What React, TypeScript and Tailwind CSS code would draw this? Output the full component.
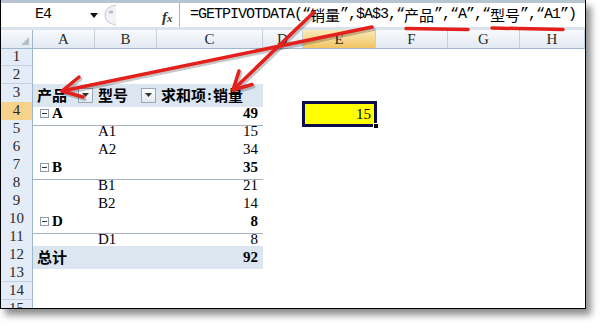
import React from 'react';

const cols = 'grid grid-cols-[32px_62px_62px_106px_40px_73px_72px_72px_1fr]';
const cjk = "font-['Noto_Sans_CJK_SC'] tracking-normal";

function MinusBox() {
  return (
    <span className="inline-flex w-[9px] h-[9px] border border-[#8e9aab] bg-white items-center justify-center mr-[3px]">
      <span className="block w-[5px] h-px bg-[#333]" />
    </span>
  );
}

function DropButton() {
  return (
    <span className="flex w-[15px] h-[15px] border border-[#9aa8b8] bg-gradient-to-b from-[#ffffff] to-[#e3e8ee] items-center justify-center">
      <svg width="7" height="4" viewBox="0 0 7 4">
        <path d="M0 0h7L3.5 4z" fill="#333" />
      </svg>
    </span>
  );
}

type PivotRow = {
  kind: 'header' | 'group' | 'item' | 'total';
  a?: string;
  b?: string;
  v?: string;
  line?: boolean;
};

const pivot: Record<number, PivotRow> = {
  3: { kind: 'header' },
  4: { kind: 'group', a: 'A', v: '49', line: true },
  5: { kind: 'item', b: 'A1', v: '15' },
  6: { kind: 'item', b: 'A2', v: '34' },
  7: { kind: 'group', a: 'B', v: '35', line: true },
  8: { kind: 'item', b: 'B1', v: '21' },
  9: { kind: 'item', b: 'B2', v: '14' },
  10: { kind: 'group', a: 'D', v: '8', line: true },
  11: { kind: 'item', b: 'D1', v: '8', line: true },
  12: { kind: 'total', v: '92' },
};

function PivotCells({ row }: { row?: PivotRow }) {
  if (!row) {
    return (
      <>
        <div />
        <div />
        <div />
      </>
    );
  }
  const line = row.line ? 'border-b border-[#a7b2c0]' : '';
  const fill = row.kind === 'header' || row.kind === 'total' ? 'bg-[#dce6f1]' : '';

  if (row.kind === 'header') {
    return (
      <>
        <div className={`${fill} flex items-center justify-between pl-[4px] pr-[2px]`}>
          <span className={`${cjk} text-[15px] font-bold`}>产品</span>
          <DropButton />
        </div>
        <div className={`${fill} flex items-center justify-between pl-[3px] pr-[1px]`}>
          <span className={`${cjk} text-[15px] font-bold`}>型号</span>
          <DropButton />
        </div>
        <div className={`${fill} flex items-center pl-[4px]`}>
          <span className={`${cjk} text-[15px] font-bold`}>求和项</span>
          <span className="font-bold px-[1px]">:</span>
          <span className={`${cjk} text-[15px] font-bold`}>销量</span>
        </div>
      </>
    );
  }

  const bold = row.kind !== 'item' ? 'font-bold' : '';
  return (
    <>
      <div className={`${fill} ${line} flex items-center pl-[7px]`}>
        {row.kind === 'group' && (
          <>
            <MinusBox />
            <span className="font-bold">{row.a}</span>
          </>
        )}
        {row.kind === 'total' && (
          <span className={`${cjk} text-[15px] font-bold -ml-[3px]`}>总计</span>
        )}
      </div>
      <div className={`${fill} ${line} flex items-center pl-[3px]`}>{row.b}</div>
      <div className={`${fill} ${line} ${bold} flex items-center justify-end pr-[5px]`}>{row.v}</div>
    </>
  );
}

function SheetRow({ n }: { n: number }) {
  const active = n === 4;
  return (
    <div className={`${cols} h-[18px] shrink-0`}>
      <div
        className={`${
          active ? 'bg-[#f7d28a]' : 'bg-[#e4ecf7]'
        } border-r border-[#9eb6ce] border-b border-b-[#c3d1e1] text-center leading-[17px] text-[15px] text-[#2a2a2a]`}
      >
        {n}
      </div>
      <PivotCells row={pivot[n]} />
      <div />
      <div className="relative">
        {active && (
          <>
            <div className="absolute -top-[1px] -left-[1px] -right-[1px] -bottom-[1px] border-[3px] border-[#0c0c4e] bg-[#ffff00] flex items-center justify-end pr-[3px]">
              15
            </div>
            <div className="absolute -right-[3px] -bottom-[3px] w-[6px] h-[6px] bg-black border border-white" />
          </>
        )}
      </div>
      <div />
      <div />
      <div />
    </div>
  );
}

function ColHead({ label, active }: { label: string; active?: boolean }) {
  return (
    <div
      className={`${
        active
          ? 'bg-gradient-to-b from-[#fbebb6] to-[#f2c462]'
          : 'bg-gradient-to-b from-[#f8fafd] to-[#e2e9f2]'
      } border-r border-[#c5d0dd] border-b border-b-[#9eb6ce] text-center leading-[18px] text-[15px] text-[#2a2a2a]`}
    >
      {label}
    </div>
  );
}

export default function App() {
  const rows = Array.from({ length: 15 }, (_, i) => i + 1);
  return (
    <div className="w-[607px] h-[330px] bg-white overflow-hidden font-['Liberation_Serif'] text-black text-[15px]">
      <div className="relative w-[586px] h-[309px] border-l border-r border-b border-black bg-white flex flex-col shadow-[5px_6px_7px_rgba(0,0,0,0.45)]">
        {/* formula bar */}
        <div className="h-[3px] bg-[#b9c4d1] shrink-0" />
        <div className="h-[24px] flex shrink-0 bg-white font-['Liberation_Mono'] tracking-[-1px]">
          <div className="w-[99px] flex items-center pl-[34px] relative">
            <span className="text-[15px]">E4</span>
            <svg className="absolute left-[89px] top-[10px]" width="8" height="5" viewBox="0 0 8 5">
              <path d="M0 0h8L4 5z" fill="#111" />
            </svg>
          </div>
          <div className="w-[79px] flex items-center relative">
            <svg className="absolute left-[2px] top-[1px]" width="16" height="22" viewBox="0 0 16 22">
              <path d="M14 1C7 2 3 6 3 11s4 9 11 10" fill="#f1f3f6" stroke="#c7ced8" strokeWidth="1.2" />
              <ellipse cx="9" cy="8" rx="2.5" ry="1.5" fill="#b5bdc8" />
            </svg>
            <span className="absolute left-[62px] top-[3px] font-['Liberation_Serif'] italic font-bold text-[15px] tracking-normal text-[#333]">
              f<span className="text-[11px]">x</span>
            </span>
          </div>
          <div className="flex-1 border-l border-[#a9b6c6] flex items-center pl-[10px] text-[15px] whitespace-pre">
            <span>=GETPIVOTDATA(“</span>
            <span className={cjk}>销量</span>
            <span>”,$A$3,“</span>
            <span className={cjk}>产品</span>
            <span>”,“A”,“</span>
            <span className={cjk}>型号</span>
            <span>”,“A1”)</span>
          </div>
        </div>
        <div className="h-[3px] bg-[#dae2ec] shrink-0" />

        {/* column headers */}
        <div className={`${cols} h-[18px] shrink-0`}>
          <div className="bg-gradient-to-b from-[#f8fafd] to-[#e2e9f2] border-r border-[#9eb6ce] border-b border-b-[#9eb6ce] relative">
            <svg className="absolute right-[3px] bottom-[3px]" width="8" height="8" viewBox="0 0 8 8">
              <path d="M8 0v8H0z" fill="#b4bfcc" />
            </svg>
          </div>
          <ColHead label="A" />
          <ColHead label="B" />
          <ColHead label="C" />
          <ColHead label="D" />
          <ColHead label="E" active />
          <ColHead label="F" />
          <ColHead label="G" />
          <ColHead label="H" />
        </div>

        {/* cells */}
        <div className="flex-1 flex flex-col overflow-hidden">
          {rows.map((n) => (
            <SheetRow key={n} n={n} />
          ))}
        </div>

        {/* red annotations */}
        <svg className="absolute inset-0 pointer-events-none" width="584" height="308" viewBox="0 0 584 308">
          <g stroke="rgba(0,0,0,0.22)" strokeWidth="4" fill="none" strokeLinecap="round" strokeLinejoin="round" transform="translate(1.5 2)">
            <path d="M313 12L232 90" />
            <path d="M251 84.5L232 90L238 71" />
            <path d="M371 27L61 91" />
            <path d="M82 97L61 91L78 77" />
          </g>
          <g stroke="#e4201c" strokeWidth="3.5" fill="none" strokeLinecap="round" strokeLinejoin="round">
            <path d="M313 12L232 90" />
            <path d="M251 84.5L232 90L238 71" />
            <path d="M371 27L61 91" />
            <path d="M82 97L61 91L78 77" />
            <path d="M405 28.5L467 29.5" />
            <path d="M491 28L562 29.5" />
          </g>
        </svg>
      </div>
    </div>
  );
}
